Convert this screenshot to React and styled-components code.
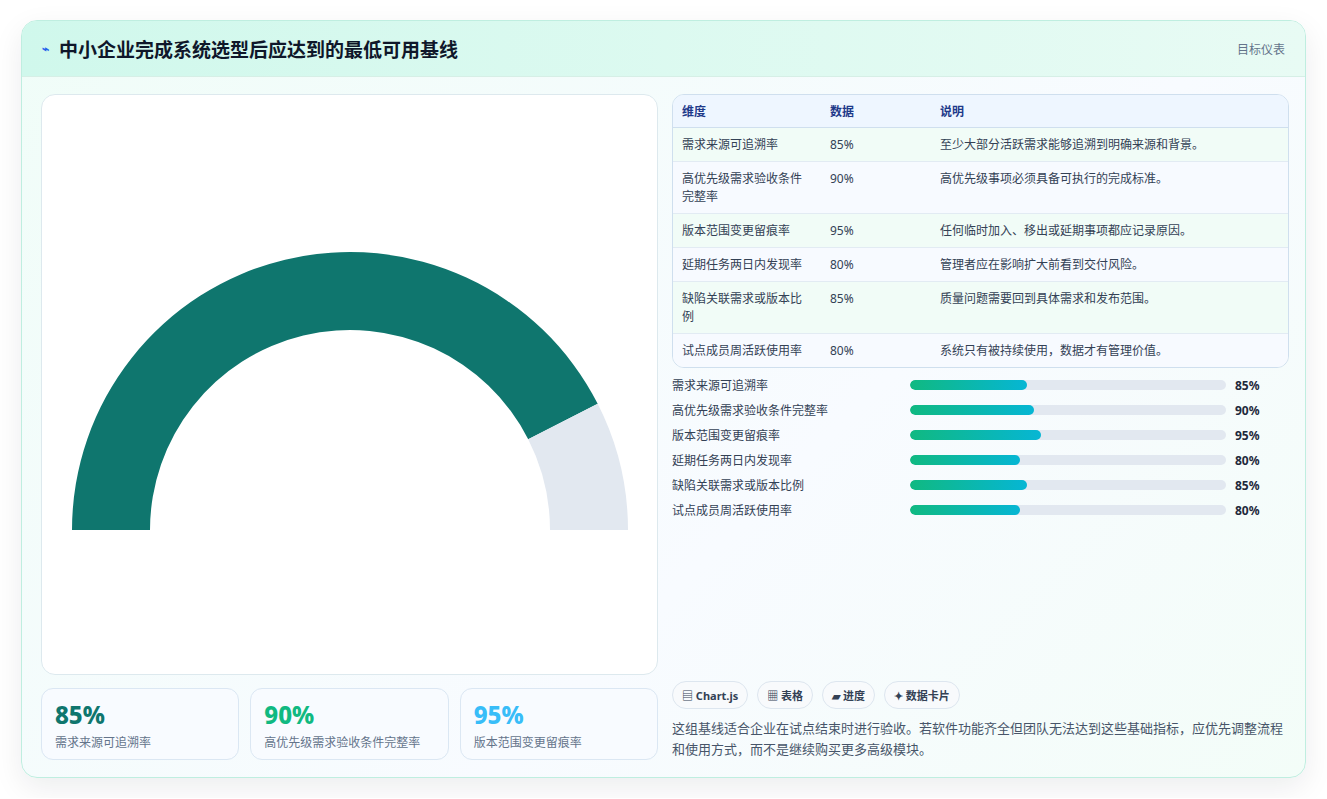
import React from 'react';
import styled, { createGlobalStyle } from 'styled-components';

const Global = createGlobalStyle`
  body { margin: 0; background: #fff; font-family: "Noto Sans", "Noto Sans CJK SC", sans-serif; }
`;

const rows = [
  ['需求来源可追溯率', 85, '至少大部分活跃需求能够追溯到明确来源和背景。'],
  ['高优先级需求验收条件完整率', 90, '高优先级事项必须具备可执行的完成标准。'],
  ['版本范围变更留痕率', 95, '任何临时加入、移出或延期事项都应记录原因。'],
  ['延期任务两日内发现率', 80, '管理者应在影响扩大前看到交付风险。'],
  ['缺陷关联需求或版本比例', 85, '质量问题需要回到具体需求和发布范围。'],
  ['试点成员周活跃使用率', 80, '系统只有被持续使用，数据才有管理价值。'],
];

const Page = styled.div`
  padding: 20px 21px;
`;
const Card = styled.div`
  border: 1px solid #bfeee0;
  border-radius: 16px;
  background: linear-gradient(135deg, #f0fdf8, #f8fbff 60%, #f3fdf8);
  box-shadow: 0 10px 30px rgba(15, 23, 42, 0.08);
  overflow: hidden;
`;
const Header = styled.div`
  height: 55px;
  display: flex;
  align-items: center;
  justify-content: space-between;
  padding: 0 20px;
  background: linear-gradient(90deg, #d0f8ec, #e8fbf4);
  border-bottom: 1px solid #d6efe6;
`;
const Title = styled.h1`
  margin: 0;
  font-size: 19px;
  font-weight: 700;
  color: #0f172a;
  display: flex;
  align-items: center;
  gap: 10px;
`;
const Tag = styled.span`
  font-size: 12px;
  color: #64748b;
`;
const Body = styled.div`
  display: grid;
  grid-template-columns: 617px 617px;
  gap: 14px;
  padding: 17px 19px 17px 19px;
`;
const Left = styled.div`
  display: flex;
  flex-direction: column;
  gap: 13px;
`;
const Chart = styled.div`
  height: 579px;
  background: #fff;
  border: 1px solid #dde9ee;
  border-radius: 14px;
`;
const Stats = styled.div`
  display: grid;
  grid-template-columns: repeat(3, 1fr);
  gap: 11px;
`;
const Stat = styled.div`
  height: 72px;
  box-sizing: border-box;
  padding: 10px 13px;
  border: 1px solid #dbe7f3;
  border-radius: 12px;
  background: #f8fbff;
`;
const StatValue = styled.div`
  font-size: 24px;
  font-weight: 800;
  line-height: 32px;
  color: ${p => p.$c};
`;
const StatLabel = styled.div`
  font-size: 12px;
  color: #64748b;
  margin-top: 2px;
`;
const Right = styled.div`
  display: flex;
  flex-direction: column;
`;
const Table = styled.table`
  width: 100%;
  border-collapse: separate;
  border-spacing: 0;
  border: 1px solid #cfdfee;
  border-radius: 12px;
  overflow: hidden;
  font-size: 12px;
  color: #334155;
  th {
    text-align: left;
    font-weight: 700;
    color: #1e3a8a;
    background: #eef6ff;
    height: 32px;
    padding: 0 9px;
    border-bottom: 1px solid #cfdfee;
  }
  td {
    padding: 8px 9px 7px;
    vertical-align: top;
    line-height: 18px;
    border-bottom: 1px solid #e2ebf3;
    background: #f7faff;
  }
  tr:nth-child(odd) td { background: #f1fcf7; }
  tr:last-child td { border-bottom: none; }
`;
const Bars = styled.div`
  margin-top: 8px;
  display: flex;
  flex-direction: column;
  gap: 7px;
`;
const BarRow = styled.div`
  display: grid;
  grid-template-columns: 229px 316px 1fr;
  gap: 9px;
  align-items: center;
  height: 18px;
  font-size: 12px;
  color: #334155;
`;
const Track = styled.div`
  height: 10px;
  border-radius: 6px;
  background: #e2e8f0;
  overflow: hidden;
`;
const Fill = styled.div`
  height: 100%;
  border-radius: 6px;
  background: linear-gradient(90deg, #10b981, #06b6d4);
`;
const Pct = styled.span`
  font-weight: 700;
  color: #1e293b;
`;
const Chips = styled.div`
  margin-top: auto;
  display: flex;
  gap: 9px;
`;
const Chip = styled.span`
  height: 26px;
  padding: 0 9px;
  display: inline-flex;
  align-items: center;
  gap: 3px;
  border: 1px solid #dde6ef;
  border-radius: 14px;
  background: #f8fafc;
  font-size: 11px;
  font-weight: 700;
  color: #334155;
`;
const Note = styled.p`
  margin: 9px 0 0;
  font-size: 13px;
  line-height: 21px;
  color: #475569;
`;

const Gauge = () => {
  const cx = 308, cy = 435, R = 278, r = 200, f = 0.85;
  const a = Math.PI - f * Math.PI;
  const ox = cx + R * Math.cos(a), oy = cy - R * Math.sin(a);
  const ix = cx + r * Math.cos(a), iy = cy - r * Math.sin(a);
  const fill = `M${cx - R} ${cy} A${R} ${R} 0 0 1 ${ox} ${oy} L${ix} ${iy} A${r} ${r} 0 0 0 ${cx - r} ${cy} Z`;
  const rest = `M${ox} ${oy} A${R} ${R} 0 0 1 ${cx + R} ${cy} L${cx + r} ${cy} A${r} ${r} 0 0 0 ${ix} ${iy} Z`;
  return (
    <svg width="616" height="579" viewBox="0 0 616 579">
      <path d={fill} fill="#0f766e" />
      <path d={rest} fill="#e2e8f0" />
    </svg>
  );
};

export default function App() {
  return (
    <Page>
      <Global />
      <Card>
        <Header>
          <Title><span style={{ color: '#2563eb', fontSize: 12 }}>⌁</span>中小企业完成系统选型后应达到的最低可用基线</Title>
          <Tag>目标仪表</Tag>
        </Header>
        <Body>
          <Left>
            <Chart><Gauge /></Chart>
            <Stats>
              <Stat><StatValue $c="#0f766e">85%</StatValue><StatLabel>需求来源可追溯率</StatLabel></Stat>
              <Stat><StatValue $c="#10b981">90%</StatValue><StatLabel>高优先级需求验收条件完整率</StatLabel></Stat>
              <Stat><StatValue $c="#38bdf8">95%</StatValue><StatLabel>版本范围变更留痕率</StatLabel></Stat>
            </Stats>
          </Left>
          <Right>
            <Table>
              <colgroup><col style={{ width: 148 }} /><col style={{ width: 110 }} /><col /></colgroup>
              <thead><tr><th>维度</th><th>数据</th><th>说明</th></tr></thead>
              <tbody>
                {rows.map(([n, v, d]) => (
                  <tr key={n}><td>{n}</td><td>{v}%</td><td>{d}</td></tr>
                ))}
              </tbody>
            </Table>
            <Bars>
              {rows.map(([n, v]) => (
                <BarRow key={n}>
                  <span>{n}</span>
                  <Track><Fill style={{ width: `${v * 1.375}px` }} /></Track>
                  <Pct>{v}%</Pct>
                </BarRow>
              ))}
            </Bars>
            <Chips>
              <Chip>▤ Chart.js</Chip>
              <Chip>▦ 表格</Chip>
              <Chip>▰ 进度</Chip>
              <Chip>✦ 数据卡片</Chip>
            </Chips>
            <Note>这组基线适合企业在试点结束时进行验收。若软件功能齐全但团队无法达到这些基础指标，应优先调整流程和使用方式，而不是继续购买更多高级模块。</Note>
          </Right>
        </Body>
      </Card>
    </Page>
  );
}
